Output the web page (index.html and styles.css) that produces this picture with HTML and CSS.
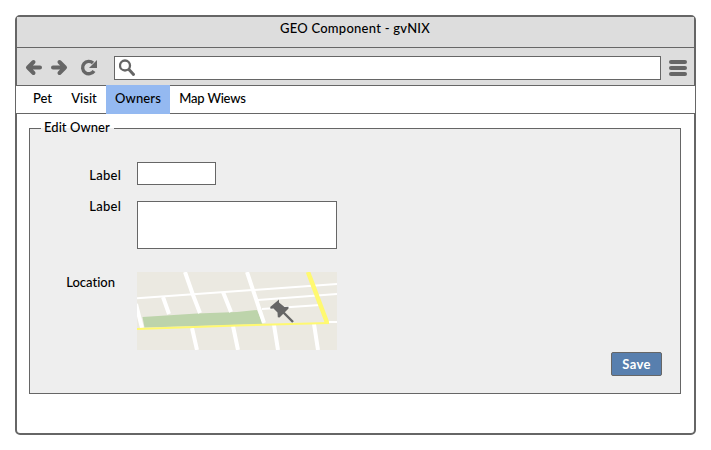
FILE: index.html
```html
<!DOCTYPE html>
<html lang="en">
<head>
<meta charset="utf-8">
<title>GEO Component - gvNIX</title>
<link rel="stylesheet" href="styles.css">
</head>
<body>
<div class="window">
  <header class="titlebar"><span class="title">GEO Component - gvNIX</span></header>
  <div class="toolbar">
    <svg class="nav" width="74" height="19" viewBox="0 0 74 19" fill="none" stroke="#666" stroke-width="4" stroke-linecap="round" stroke-linejoin="round">
      <path d="M8.500 4 3 9.500l5.500 5.500M3 9.500h12"/>
      <path d="M34.500 4l5.500 5.500-5.500 5.500M40 9.500H28"/>
      <path d="M69 13a6.200 6.200 0 1 1-1-8" stroke-width="3.400" stroke-linecap="butt"/>
      <path d="M72 2v8h-8z" fill="#666" stroke="none"/>
    </svg>
    <div class="address">
      <svg width="18" height="18" viewBox="0 0 18 18" fill="none" stroke="#666">
        <circle cx="6" cy="6.500" r="5" stroke-width="2.300"/>
        <path d="M10 10.500l4.500 5" stroke-width="3" stroke-linecap="round"/>
      </svg>
    </div>
    <div class="menu"><i></i><i></i><i></i></div>
  </div>
  <nav class="tabs">
    <a class="tab pet">Pet</a>
    <a class="tab visit">Visit</a>
    <a class="tab owners">Owners</a>
    <a class="tab views">Map Wiews</a>
  </nav>
  <main>
    <fieldset>
      <legend>Edit Owner</legend>
      <div class="form">
        <label class="name">Label</label><input type="text">
        <label class="notes">Label</label><textarea></textarea>
        <label class="location">Location</label>
        <svg class="map" width="200" height="78" viewBox="0 0 200 78" fill="none">
          <path fill="#ebe9e1" d="M0 0h200v78H0z"/>
          <path fill="#bdd4ab" d="M5.500 45 60 41.500 100 40l20-2 6 14L7.500 55.500z"/>
          <path stroke="#fff" stroke-width="4" d="M48 0l8 23 7 18M26 25l6 17M-1 32l6 24M86 20l8 20M110 0l17 51M55 56l5 22M96 54l5 24M137 53l4 25M177 52l4 26"/>
          <path stroke="#fff" stroke-width="2" d="M0 26.300 200 12M121 28l79-6M125 37l58-4M190 50h10"/>
          <path stroke="#fff970" stroke-width="4.500" d="M171 0l19 50.500"/>
          <path stroke="#fff970" stroke-width="2" d="M0 57l100-3.500 92-2.500"/>
          <path fill="#666" d="M142 27.500v3l5.500 4.500 4-.3v1.800L142.500 45.500l-1.700-.3-.3-4.700-4-4-3 .3-.3-1.800z"/>
          <path stroke="#666" stroke-width="2.400" d="M146.500 40.500l9.500 9.500"/>
        </svg>
      </div>
      <button type="button">Save</button>
    </fieldset>
  </main>
</div>
</body>
</html>
```
FILE: styles.css
```css
* { box-sizing: border-box; }
body { margin: 0; padding: 15px; background: #fff; color: #000; font: 500 13px/18px Lato, sans-serif; font-variant-ligatures: none; }
.window { width: 681px; height: 420px; border: 2px solid #666; border-radius: 5px; }
.titlebar { height: 31px; border-bottom: 1px solid #666; background: #ddd; text-align: center; padding: 2px 1px 0 0; letter-spacing: .25px; }
.toolbar { height: 37px; background: #ddd; display: flex; align-items: center; padding: 2px 6px 0 8px; }
.address { width: 547px; height: 24px; margin-left: 15px; border: 1px solid #666; background: #fff; padding: 2px 4px; }
.address svg { display: block; }
.menu { width: 18px; margin: 1px 0 0 8px; display: grid; gap: 2px; }
.menu i { height: 4px; border-radius: 2px; background: #666; }
.tabs { height: 29px; margin: 0 -2px; border: 1px solid #666; background: #fff; display: flex; padding-left: 8px; }
.tab { padding-top: 3px; text-align: center; }
.pet { width: 38px; padding-right: 1px; }
.visit { width: 44px; }
.owners { width: 64px; background: #94b9f1; margin: -1px 0; padding-top: 4px; letter-spacing: .15px; }
.views { width: 85px; letter-spacing: -.2px; }
main { padding: 5px 13px 0 12px; }
fieldset { margin: 0; height: 275px; min-width: 0; border: 1px solid #666; background: #eee; padding: 0; }
legend { height: 18px; line-height: 16px; margin-left: 11px; padding: 0 4px 0 3px; letter-spacing: .05px; }
.form { display: grid; grid-template: 39px 71px 78px / 91px 200px; column-gap: 16px; padding-top: 25px; align-items: start; }
label { justify-self: end; letter-spacing: .25px; }
.name { margin-top: 4px; }
.notes { margin-top: -4px; }
.location { margin: 1px 6px 0 0; letter-spacing: 0; }
input, textarea { display: block; margin: 0; padding: 2px 4px; border: 1px solid #666; border-radius: 0; background: #fff; font: inherit; resize: none; }
input { width: 79px; height: 23px; }
textarea { width: 200px; height: 48px; }
.map { display: block; }
button { display: block; width: 51px; height: 24px; margin: 2px 18px 0 auto; padding: 0 0 1px; border: 1px solid #666; border-radius: 2px; background: #587fae; color: #fff; font: 700 13px/18px Lato, sans-serif; letter-spacing: .3px; }
```
